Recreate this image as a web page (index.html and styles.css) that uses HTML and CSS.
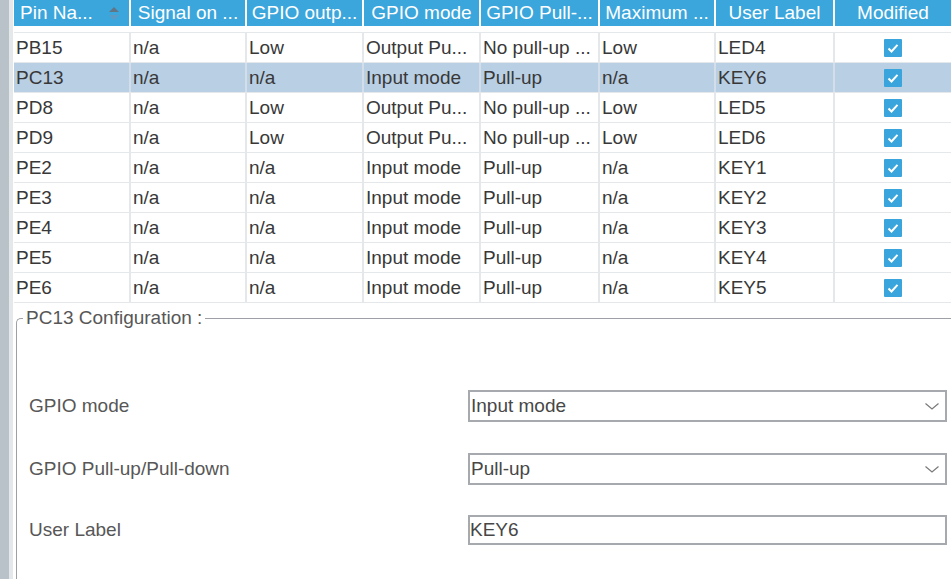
FILE: index.html
```html
<!DOCTYPE html>
<html lang="en">
<head>
<meta charset="utf-8">
<title>PC13 Configuration</title>
<link rel="stylesheet" href="styles.css">
</head>
<body>
<div class="app">
  <div class="rail"></div>
  <div class="edge"></div>
  <main class="main">
    <div class="thead">
      <div class="th th-sort"><span>Pin Na...</span>
        <svg class="sort" width="12" height="15" viewBox="0 0 12 15"><path d="M1 6 L6 1 L11 6 Z" fill="#617585"/><path d="M1 9 L6 14 L11 9 Z" fill="#5d9ac3"/></svg>
      </div>
      <div class="th">Signal on ...</div>
      <div class="th">GPIO outp...</div>
      <div class="th">GPIO mode</div>
      <div class="th">GPIO Pull-...</div>
      <div class="th">Maximum ...</div>
      <div class="th">User Label</div>
      <div class="th">Modified</div>
    </div>
    <div class="tbody">
      <div class="tr"><div class="td">PB15</div><div class="td">n/a</div><div class="td">Low</div><div class="td">Output Pu...</div><div class="td">No pull-up ...</div><div class="td">Low</div><div class="td">LED4</div><div class="td td-check"><span class="check"><svg width="18" height="18" viewBox="0 0 18 18"><path d="M4.5 9.5 L7.5 12.5 L13.5 5.8" fill="none" stroke="#fff" stroke-width="2"/></svg></span></div></div>
      <div class="tr tr-selected"><div class="td">PC13</div><div class="td">n/a</div><div class="td">n/a</div><div class="td">Input mode</div><div class="td">Pull-up</div><div class="td">n/a</div><div class="td">KEY6</div><div class="td td-check"><span class="check"><svg width="18" height="18" viewBox="0 0 18 18"><path d="M4.5 9.5 L7.5 12.5 L13.5 5.8" fill="none" stroke="#fff" stroke-width="2"/></svg></span></div></div>
      <div class="tr"><div class="td">PD8</div><div class="td">n/a</div><div class="td">Low</div><div class="td">Output Pu...</div><div class="td">No pull-up ...</div><div class="td">Low</div><div class="td">LED5</div><div class="td td-check"><span class="check"><svg width="18" height="18" viewBox="0 0 18 18"><path d="M4.5 9.5 L7.5 12.5 L13.5 5.8" fill="none" stroke="#fff" stroke-width="2"/></svg></span></div></div>
      <div class="tr"><div class="td">PD9</div><div class="td">n/a</div><div class="td">Low</div><div class="td">Output Pu...</div><div class="td">No pull-up ...</div><div class="td">Low</div><div class="td">LED6</div><div class="td td-check"><span class="check"><svg width="18" height="18" viewBox="0 0 18 18"><path d="M4.5 9.5 L7.5 12.5 L13.5 5.8" fill="none" stroke="#fff" stroke-width="2"/></svg></span></div></div>
      <div class="tr"><div class="td">PE2</div><div class="td">n/a</div><div class="td">n/a</div><div class="td">Input mode</div><div class="td">Pull-up</div><div class="td">n/a</div><div class="td">KEY1</div><div class="td td-check"><span class="check"><svg width="18" height="18" viewBox="0 0 18 18"><path d="M4.5 9.5 L7.5 12.5 L13.5 5.8" fill="none" stroke="#fff" stroke-width="2"/></svg></span></div></div>
      <div class="tr"><div class="td">PE3</div><div class="td">n/a</div><div class="td">n/a</div><div class="td">Input mode</div><div class="td">Pull-up</div><div class="td">n/a</div><div class="td">KEY2</div><div class="td td-check"><span class="check"><svg width="18" height="18" viewBox="0 0 18 18"><path d="M4.5 9.5 L7.5 12.5 L13.5 5.8" fill="none" stroke="#fff" stroke-width="2"/></svg></span></div></div>
      <div class="tr"><div class="td">PE4</div><div class="td">n/a</div><div class="td">n/a</div><div class="td">Input mode</div><div class="td">Pull-up</div><div class="td">n/a</div><div class="td">KEY3</div><div class="td td-check"><span class="check"><svg width="18" height="18" viewBox="0 0 18 18"><path d="M4.5 9.5 L7.5 12.5 L13.5 5.8" fill="none" stroke="#fff" stroke-width="2"/></svg></span></div></div>
      <div class="tr"><div class="td">PE5</div><div class="td">n/a</div><div class="td">n/a</div><div class="td">Input mode</div><div class="td">Pull-up</div><div class="td">n/a</div><div class="td">KEY4</div><div class="td td-check"><span class="check"><svg width="18" height="18" viewBox="0 0 18 18"><path d="M4.5 9.5 L7.5 12.5 L13.5 5.8" fill="none" stroke="#fff" stroke-width="2"/></svg></span></div></div>
      <div class="tr"><div class="td">PE6</div><div class="td">n/a</div><div class="td">n/a</div><div class="td">Input mode</div><div class="td">Pull-up</div><div class="td">n/a</div><div class="td">KEY5</div><div class="td td-check"><span class="check"><svg width="18" height="18" viewBox="0 0 18 18"><path d="M4.5 9.5 L7.5 12.5 L13.5 5.8" fill="none" stroke="#fff" stroke-width="2"/></svg></span></div></div>
    </div>
    <fieldset class="config">
      <legend class="config-title">PC13 Configuration :</legend>
      <div class="field">
        <span class="field-label">GPIO mode</span>
        <div class="select"><span>Input mode</span><svg width="14" height="7" viewBox="0 0 14 7"><path d="M0.5 0.5 L7 6 L13.5 0.5" fill="none" stroke="#7a7a7a" stroke-width="1.2"/></svg></div>
      </div>
      <div class="field">
        <span class="field-label">GPIO Pull-up/Pull-down</span>
        <div class="select"><span>Pull-up</span><svg width="14" height="7" viewBox="0 0 14 7"><path d="M0.5 0.5 L7 6 L13.5 0.5" fill="none" stroke="#7a7a7a" stroke-width="1.2"/></svg></div>
      </div>
      <div class="field field-text">
        <span class="field-label">User Label</span>
        <div class="textbox">KEY6</div>
      </div>
    </fieldset>
  </main>
</div>
</body>
</html>
```

FILE: styles.css
```css
* { box-sizing: border-box; }

html, body {
  margin: 0;
  padding: 0;
  background: #ffffff;
}

body {
  width: 951px;
  height: 579px;
  overflow: hidden;
  font-family: "Liberation Sans", Arial, sans-serif;
  font-size: 19px;
  color: #383838;
}

.app {
  display: flex;
  height: 579px;
}

.rail {
  width: 9px;
  flex: none;
  background: #b8c2c8;
}

.edge {
  width: 4px;
  flex: none;
  background: #e4e8eb;
}

.main {
  flex: 1;
  min-width: 0;
  padding-left: 1px;
  display: flex;
  flex-direction: column;
  overflow: hidden;
}

.thead,
.tr {
  display: grid;
  grid-template-columns: 115px 114px 115px 115px 117px 114px 117px 1fr;
  column-gap: 2px;
}

.thead {
  height: 26px;
  flex: none;
}

.th {
  background: #3ba6dc;
  color: #ffffff;
  line-height: 26px;
  text-align: center;
  white-space: nowrap;
  overflow: hidden;
}

.th-sort {
  display: flex;
  align-items: center;
  justify-content: space-between;
  padding: 0 9px 0 6px;
}

.sort {
  display: block;
}

.tbody {
  flex: none;
  margin-top: 6px;
  background: #e5e8eb;
  padding: 1px 0;
  display: flex;
  flex-direction: column;
  gap: 1px;
}

.td {
  background: #ffffff;
  height: 29px;
  line-height: 29px;
  padding-left: 2px;
  white-space: nowrap;
  overflow: hidden;
}

.tr-selected {
  background: #d3deea;
}

.tr-selected .td {
  background: #b9cfe4;
}

.td-check {
  display: flex;
  align-items: center;
  justify-content: center;
  padding-left: 0;
}

.check {
  width: 18px;
  height: 18px;
  background: #3aa5dc;
  border-radius: 1px;
  display: block;
}

.check svg {
  display: block;
}

.config {
  flex: 1;
  min-height: 0;
  margin: 4px 0 0 2px;
  padding: 61px 0 0 12px;
  border: 1px solid #9da1a5;
  border-right: none;
  border-bottom: none;
  border-radius: 5px 0 0 0;
  min-width: 0;
  display: flex;
  flex-direction: column;
  gap: 31px;
}

.config-title {
  margin-left: -6px;
  padding: 0 3px;
  line-height: 22px;
  color: #575757;
}

.field {
  display: grid;
  grid-template-columns: 439px 479px;
  align-items: center;
  height: 32px;
}

.field-text {
  height: 30px;
  margin-top: -1px;
}

.field-label {
  color: #575757;
}

.select {
  height: 32px;
  border: 2px solid #a6aaae;
  display: flex;
  align-items: center;
  justify-content: space-between;
  padding: 0 6px 0 1px;
  color: #474747;
}

.select svg {
  display: block;
}

.textbox {
  height: 30px;
  border: 2px solid #a6aaae;
  line-height: 26px;
  padding-left: 0;
  color: #474747;
}
```
